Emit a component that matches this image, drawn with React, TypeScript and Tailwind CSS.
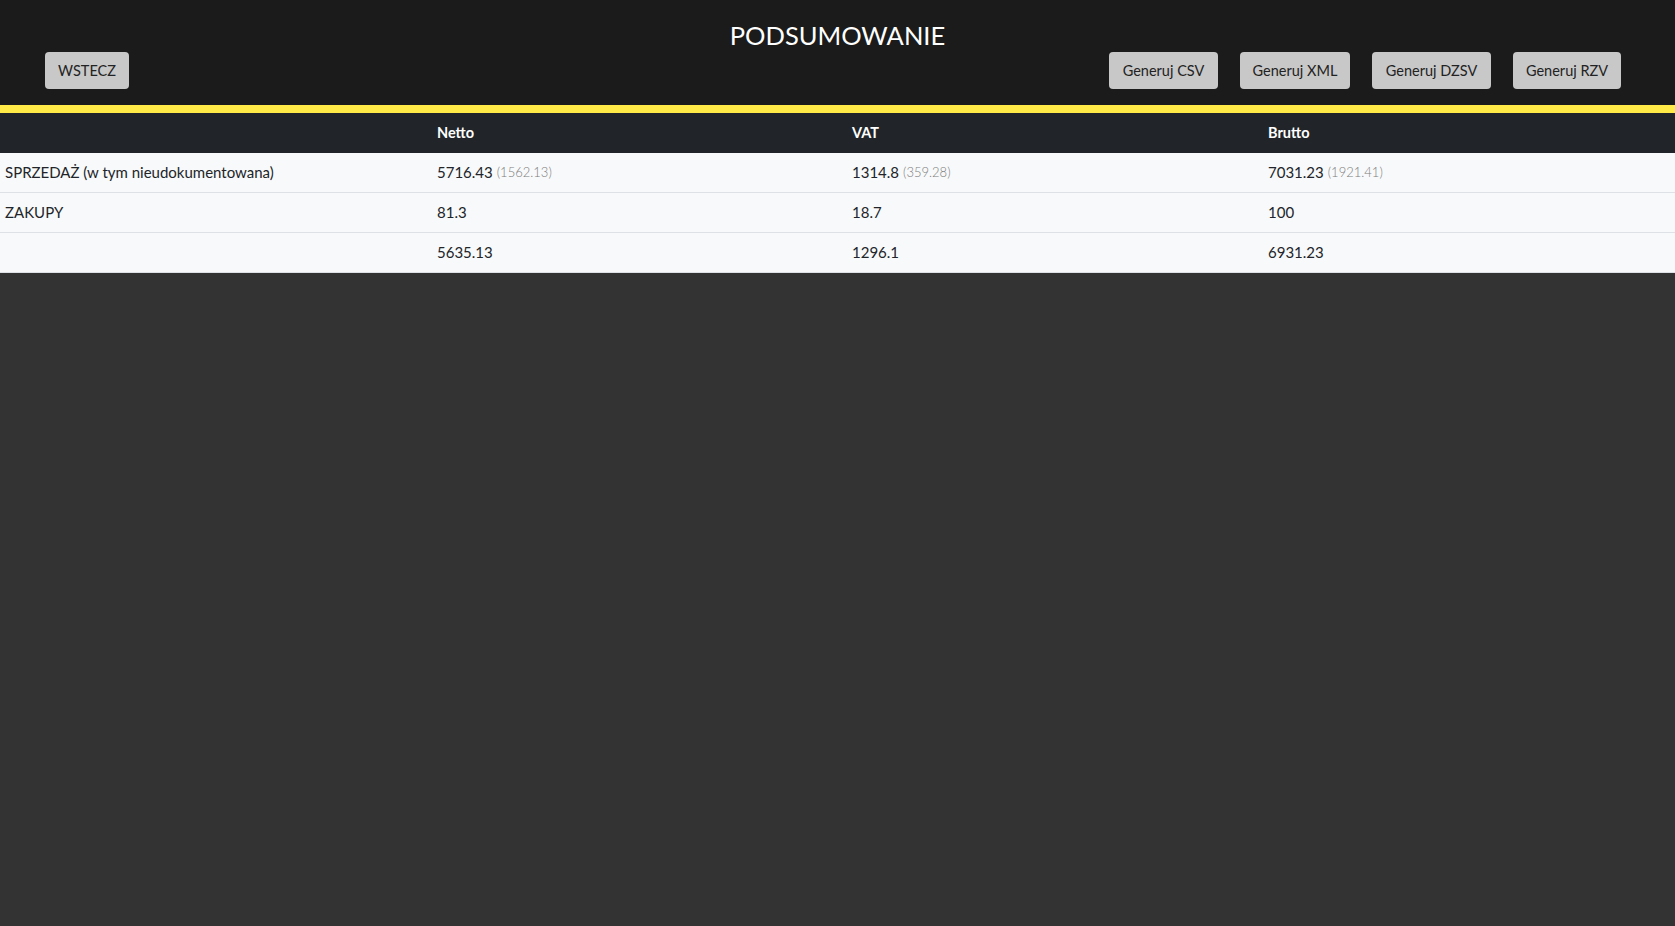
const rows = [
    { label: "SPRZEDAŻ (w tym nieudokumentowana)", netto: "5716.43", nettoSub: "(1562.13)", vat: "1314.8", vatSub: "(359.28)", brutto: "7031.23", bruttoSub: "(1921.41)" },
    { label: "ZAKUPY", netto: "81.3", vat: "18.7", brutto: "100" },
    { label: "", netto: "5635.13", vat: "1296.1", brutto: "6931.23" },
];

const Cell = ({ value, sub }: { value: string; sub?: string }) => (
    <div className="px-[5px] flex items-center">
        <span>{value}</span>
        {sub && <span className="ml-[4px] text-[13px] text-[#7d7d7d] font-light">{sub}</span>}
    </div>
);

export default function App() {
    return (
        <div className="min-h-[926px] bg-[#333333] font-['Lato','Noto_Sans',sans-serif]">
            <header className="bg-[#1b1b1b] pt-[17px] pb-[16px]">
                <h1 className="text-center text-white text-[25.5px] leading-[35px] translate-y-[1px]">PODSUMOWANIE</h1>
                <div className="flex justify-between items-center pl-[45px] pr-[54px]">
                    <button className="h-[37px] w-[84px] rounded-[4px] bg-[#c8c8c8] text-[14.5px] text-[#222]">WSTECZ</button>
                    <div className="flex gap-[22px]">
                        <button className="h-[37px] w-[109px] rounded-[4px] bg-[#c8c8c8] text-[14.5px] text-[#222]">Generuj CSV</button>
                        <button className="h-[37px] w-[110px] rounded-[4px] bg-[#c8c8c8] text-[14.5px] text-[#222]">Generuj XML</button>
                        <button className="h-[37px] w-[119px] rounded-[4px] bg-[#c8c8c8] text-[14.5px] text-[#222]">Generuj DZSV</button>
                        <button className="h-[37px] w-[108px] rounded-[4px] bg-[#c8c8c8] text-[14.5px] text-[#222]">Generuj RZV</button>
                    </div>
                </div>
            </header>
            <div className="h-[8px] bg-[#ffea47]" />
            <div className="grid grid-cols-[432px_415px_416px_1fr] h-[40px] bg-[#212529] text-white font-bold text-[14.5px]">
                <div className="px-[5px]" />
                <div className="px-[5px] flex items-center">Netto</div>
                <div className="px-[5px] flex items-center">VAT</div>
                <div className="px-[5px] flex items-center">Brutto</div>
            </div>
            {rows.map((r, i) => (
                <div
                    key={i}
                    className="grid grid-cols-[432px_415px_416px_1fr] h-[40px] bg-[#f8f9fa] border-b border-[#dee2e6] text-[15px] text-[#212529]"
                >
                    <div className="px-[5px] flex items-center">{r.label}</div>
                    <Cell value={r.netto} sub={r.nettoSub} />
                    <Cell value={r.vat} sub={r.vatSub} />
                    <Cell value={r.brutto} sub={r.bruttoSub} />
                </div>
            ))}
        </div>
    );
}
